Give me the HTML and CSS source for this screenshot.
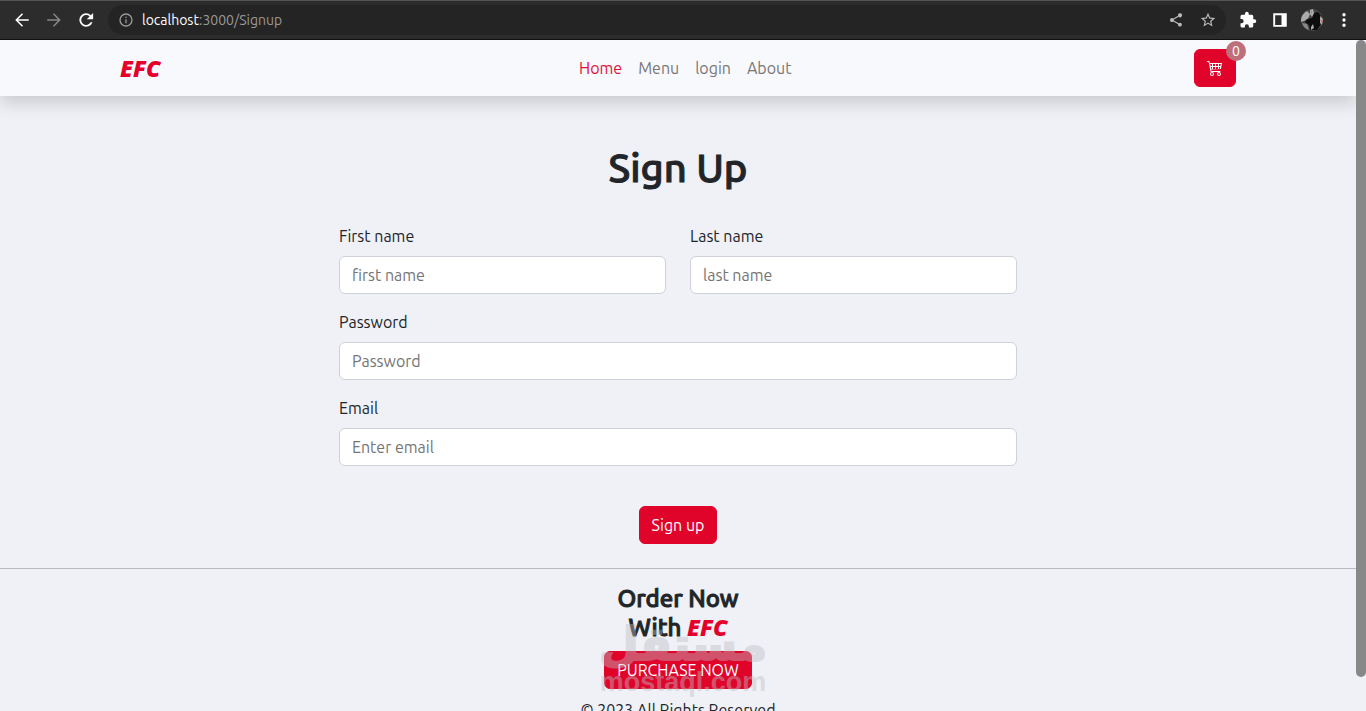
FILE: index.html
```
<!DOCTYPE html>
<html lang="en">
<head>
  <meta charset="UTF-8">
  <meta name="viewport" content="width=device-width, initial-scale=1.0">
  <title>Sign Up</title>
  <link rel="stylesheet" href="styles.css">
</head>
<body>
  <!-- browser toolbar -->
  <header class="toolbar">
    <button class="tool" type="button" aria-label="Back">
      <svg viewBox="0 0 24 24"><path d="M21 11H6.800l6.600-6.600L12 3l-9 9 9 9 1.400-1.400L6.800 13H21z"/></svg>
    </button>
    <button class="tool disabled" type="button" aria-label="Forward">
      <svg viewBox="0 0 24 24"><path d="M3 11h14.200l-6.600-6.600L12 3l9 9-9 9-1.400-1.400 6.600-6.600H3z"/></svg>
    </button>
    <button class="tool" type="button" aria-label="Reload">
      <svg viewBox="0 0 24 24"><path d="M18.500 5.500A9 9 0 1 0 20.700 15h-2.600A6.600 6.600 0 1 1 16.800 7.200L13 11h8.500V2.500z"/></svg>
    </button>
    <div class="address">
      <svg class="info" viewBox="0 0 24 24"><path d="M11 7h2v2h-2zm0 4h2v6h-2zm1-9a10 10 0 1 0 0 20 10 10 0 0 0 0-20zm0 18a8 8 0 1 1 0-16 8 8 0 0 1 0 16z"/></svg>
      <span class="url"><b>localhost</b>:3000/Signup</span>
      <button class="tool small" type="button" aria-label="Share">
        <svg viewBox="0 0 24 24"><path d="M18 16.100c-.8 0-1.400.3-2 .8l-7.100-4.200a3 3 0 0 0 0-1.400L16 7.200A3 3 0 1 0 15 5c0 .2 0 .5.100.7L8 9.800a3 3 0 1 0 0 4.400l7.100 4.200-.1.600a2.900 2.900 0 1 0 3-2.900z"/></svg>
      </button>
      <button class="tool small" type="button" aria-label="Bookmark">
        <svg viewBox="1 1 22 22"><path d="M22 9.200l-7.200-.6L12 2 9.200 8.600 2 9.200l5.500 4.800L5.800 21 12 17.300 18.200 21l-1.600-7zM12 15.400l-3.800 2.300 1-4.300-3.300-2.900 4.400-.4L12 6.100l1.700 4 4.400.4-3.300 2.900 1 4.300z"/></svg>
      </button>
    </div>
    <button class="tool" type="button" aria-label="Extensions">
      <svg viewBox="0 0 24 24"><path d="M20.500 11H19V7a2 2 0 0 0-2-2h-4V3.500a2.500 2.500 0 0 0-5 0V5H4a2 2 0 0 0-2 2v3.800h1.500a2.700 2.700 0 0 1 0 5.400H2V20c0 1.100.9 2 2 2h3.800v-1.500a2.700 2.700 0 0 1 5.400 0V22H17a2 2 0 0 0 2-2v-4h1.500a2.500 2.500 0 0 0 0-5z"/></svg>
    </button>
    <button class="tool" type="button" aria-label="Side panel">
      <svg viewBox="0 0 24 24"><path fill-rule="evenodd" d="M3 3h18v18H3zM5.500 5.500v13H14v-13z"/></svg>
    </button>
    <button class="tool avatar" type="button" aria-label="Profile">
      <svg viewBox="0 0 22 22">
        <circle cx="11" cy="11" r="11" fill="#444"/>
        <path d="M1 7a11 11 0 0 1 5-5l3 3-2 5-4 2-3 1a11 11 0 0 1 1-6z" fill="#aaa"/>
        <path d="M1 14l5 1 2 6a11 11 0 0 1-7-7z" fill="#888"/>
        <path d="M6 10l5-1 2-5 4-1 3 4v8l-4 6H9l-1-5-4-3z" fill="#0d0d0d"/>
        <path d="M9 1l3-1 1 4-2 4-2-3zM19 7l3 3-1 6-2-2zM10 18l2-3 1 4-3 2z" fill="#aaa"/>
        <path d="M10 2h1v2h-1zM20 11h2v2h-2z" fill="#d66"/>
      </svg>
    </button>
    <button class="tool" type="button" aria-label="Menu">
      <svg viewBox="0 0 24 24"><circle cx="12" cy="5" r="2.200"/><circle cx="12" cy="12" r="2.200"/><circle cx="12" cy="19" r="2.200"/></svg>
    </button>
  </header>

  <div class="window">
    <div class="page">
      <nav class="navbar">
        <div class="container">
          <a class="brand" href="#">EFC</a>
          <div class="links">
            <a class="active" href="#">Home</a>
            <a href="#">Menu</a>
            <a href="#">login</a>
            <a href="#">About</a>
          </div>
          <button class="btn cart" type="button" aria-label="Cart">
            <svg viewBox="0 0 16 16"><path d="M0 1.500A.5.5 0 0 1 .5 1H2a.5.5 0 0 1 .485.379L2.890 3H14.500a.5.5 0 0 1 .49.598l-1 5a.5.5 0 0 1-.465.401l-9.397.472L4.415 11H13a.5.5 0 0 1 0 1H4a.5.5 0 0 1-.491-.408L2.010 3.607 1.610 2H.5a.5.5 0 0 1-.5-.5zM3.140 4l.5 2H5V4zM6 4v2h2V4zm3 0v2h2V4zm3 0v2h1.360l.5-2zm1.110 3H12v2h.610zM11 7H9v2h2zM8 7H6v2h2zM5 7H3.890l.5 2H5zm0 5a2 2 0 1 0 0 4 2 2 0 0 0 0-4zm0 1a1 1 0 1 1 0 2 1 1 0 0 1 0-2zm7-1a2 2 0 1 0 0 4 2 2 0 0 0 0-4zm0 1a1 1 0 1 1 0 2 1 1 0 0 1 0-2z"/></svg>
            <span class="badge">0</span>
          </button>
        </div>
      </nav>

      <main>
        <h1>Sign Up</h1>
        <form>
          <div class="row">
            <div class="field">
              <label for="firstName">First name</label>
              <input type="text" id="firstName" placeholder="first name">
            </div>
            <div class="field">
              <label for="lastName">Last name</label>
              <input type="text" id="lastName" placeholder="last name">
            </div>
          </div>
          <div class="field">
            <label for="password">Password</label>
            <input type="password" id="password" placeholder="Password">
          </div>
          <div class="field">
            <label for="email">Email</label>
            <input type="email" id="email" placeholder="Enter email">
          </div>
          <button class="btn submit" type="submit">Sign up</button>
        </form>
      </main>

      <footer>
        <h4>Order Now<br>With <span class="brand">EFC</span></h4>
        <div class="purchase">
          <button class="btn" type="button">PURCHASE NOW</button>
          <div class="watermark" aria-hidden="true">
            <span class="arabic" lang="ar">مستقل</span>
            <span class="latin">mostaql.com</span>
          </div>
        </div>
        <p>© 2023 All Rights Reserved</p>
      </footer>
    </div>
    <div class="scrollbar"><div class="thumb"></div></div>
  </div>
</body>
</html>
```
FILE: styles.css
```
* {
  box-sizing: border-box;
}

body {
  margin: 0;
  height: 100vh;
  display: flex;
  flex-direction: column;
  overflow: hidden;
  background-color: #f0f1f6;
  color: #212529;
  font-family: Ubuntu, "Noto Sans", sans-serif;
  font-size: 16px;
  line-height: 24px;
}

button,
input {
  font: inherit;
}

a {
  text-decoration: none;
}

/* browser toolbar */
.toolbar {
  flex: none;
  display: flex;
  align-items: center;
  height: 40px;
  padding: 0 6px;
  background-color: #2c2c2c;
  border-top: 1px solid #555;
  border-bottom: 1px solid #111;
}

.tool {
  width: 32px;
  height: 32px;
  padding: 7px;
  border: none;
  background: none;
  color: #fff;
}

.tool svg {
  display: block;
  width: 18px;
  height: 18px;
  fill: currentColor;
}

.tool.disabled {
  color: #888;
}

.tool.small {
  padding: 8px;
  color: #bbb;
}

.tool.small svg {
  width: 16px;
  height: 16px;
}

.tool.avatar {
  padding: 5px;
}

.tool.avatar svg {
  width: 22px;
  height: 22px;
}

.address {
  flex: 1;
  display: flex;
  align-items: center;
  height: 30px;
  margin: 0 6px;
  padding: 0 2px 0 10px;
  border-radius: 15px;
  background-color: #242424;
}

.info {
  width: 16px;
  height: 16px;
  margin-right: 8px;
  fill: #999;
}

.url {
  flex: 1;
  color: #999;
  font-size: 14px;
}

.url b {
  color: #fff;
  font-weight: normal;
}

/* page */
.window {
  flex: 1;
  min-height: 0;
  display: flex;
}

.page {
  flex: 1;
  overflow: hidden;
}

.scrollbar {
  width: 10px;
}

.thumb {
  height: 95%;
  border-radius: 5px;
  background-color: #888;
}

.navbar {
  padding: 8px 0;
  background-color: #f8f9fc;
  box-shadow: 0 8px 16px rgba(0, 0, 0, 0.15);
}

.container {
  display: flex;
  align-items: center;
  justify-content: space-between;
  max-width: 1140px;
  margin: 0 auto;
  padding: 0 12px;
}

.brand {
  color: #e4002b;
  font-family: "Open Sans", sans-serif;
  font-size: 23px;
  font-style: italic;
  font-weight: 800;
  -webkit-text-stroke: 0;
}

.navbar .brand {
  margin-right: 16px;
}

.links {
  display: flex;
  gap: 16px;
  padding: 8px 0;
}

.links a {
  color: #777;
}

.links .active {
  color: #dc143c;
}

.btn {
  height: 38px;
  padding: 0 12px;
  border: 1px solid #e0042b;
  border-radius: 6px;
  background-color: #e0042b;
  color: #fff;
  cursor: pointer;
}

.cart {
  position: relative;
}

.cart svg {
  display: block;
  width: 16px;
  height: 16px;
  fill: #fff;
}

.badge {
  position: absolute;
  top: -9px;
  right: -11px;
  width: 20px;
  height: 20px;
  border-radius: 50%;
  background-color: #bd6f7c;
  font-size: 14px;
  line-height: 20px;
}

main {
  width: 50%;
  margin: 0 auto;
  padding: 48px 0 24px;
}

h1 {
  margin: 0 0 32px;
  font-size: 40px;
  font-weight: 500;
  line-height: 48px;
  text-align: center;
  -webkit-text-stroke: 1px currentColor;
}

.row {
  display: flex;
  gap: 24px;
}

.field {
  flex: 1;
  margin-bottom: 16px;
}

.field label {
  display: block;
  margin-bottom: 8px;
}

.field input {
  display: block;
  width: 100%;
  height: 38px;
  padding: 0 12px;
  border: 1px solid #ced0da;
  border-radius: 6px;
  background-color: #fff;
}

.field input::placeholder {
  color: #757575;
}

.submit {
  display: block;
  margin: 40px auto 0;
}

footer {
  padding-top: 15px;
  border-top: 1px solid #b9bbc0;
  text-align: center;
}

h4 {
  margin: 0 0 9px;
  font-size: 24px;
  font-weight: 500;
  line-height: 29px;
  -webkit-text-stroke: 1px currentColor;
}

.purchase {
  position: relative;
  margin-bottom: 9px;
}

footer p {
  margin: 0;
}

/* stamp over the footer */
.watermark {
  position: absolute;
  top: -30px;
  left: 0;
  right: 0;
  display: flex;
  flex-direction: column;
  align-items: center;
  padding-left: 10px;
  color: #bebec4;
  opacity: 0.42;
  pointer-events: none;
}

.arabic {
  font-family: "DejaVu Sans", sans-serif;
  font-size: 46px;
  font-weight: bold;
  line-height: 46px;
  -webkit-text-stroke: 2px currentColor;
}

.latin {
  font-family: "Liberation Sans", sans-serif;
  font-size: 27px;
  font-weight: bold;
  line-height: 30px;
}
```
